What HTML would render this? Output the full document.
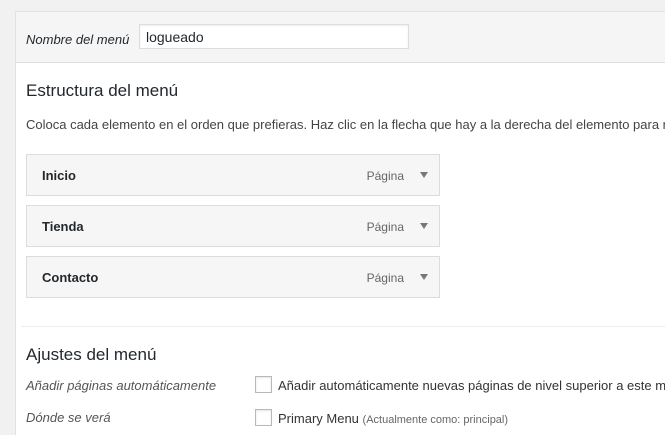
<!DOCTYPE html>
<html style="overflow:hidden;width:665px;height:435px"><head><meta charset="utf-8"><style>
body{margin:0;width:665px;height:435px;background:#f1f1f1;font-family:"Liberation Sans",sans-serif;color:#23282d;overflow:hidden;position:relative;font-size:13px}
.panel{position:absolute;left:15px;top:11px;width:660px;height:440px;background:#fff;border:1px solid #e2e2e2;overflow:hidden}
.hdr{position:absolute;left:0;top:0;right:0;height:50px;background:#f5f5f5;border-bottom:1px solid #dedede}
.a{position:absolute;white-space:nowrap}
.inp{position:absolute;left:123px;top:12px;height:25px;background:#fff;border:1px solid #ddd;box-shadow:inset 0 1px 2px rgba(0,0,0,.07);font-size:14px;line-height:25px;padding-left:6px;box-sizing:border-box;width:270px}
.item{position:absolute;left:10px;width:412px;height:40px;background:#f6f6f6;border:1px solid #dcdcdc;}
.item b{position:absolute;left:15px;top:13px;font-size:13px;font-weight:bold;color:#23282d}
.item span{position:absolute;right:35px;top:14px;font-size:12px;color:#666}
.item i{position:absolute;right:11px;top:17px;width:0;height:0;border-left:4px solid transparent;border-right:4px solid transparent;border-top:6px solid #777}
.cb{position:absolute;width:15px;height:15px;border:1px solid #b4b9be;background:#fff;box-shadow:inset 0 1px 2px rgba(0,0,0,.1)}
.it{font-style:italic;color:#555;font-size:13px}
</style></head><body>
<div class="panel">
 <div class="hdr">
  <div class="a it" style="left:10px;top:20px;color:#23282d">Nombre del menú</div>
  <div class="inp">logueado</div>
 </div>
 <div class="a" style="left:10px;top:69px;font-size:17px">Estructura del menú</div>
 <div class="a" style="left:10px;top:105px;font-size:13px;color:#444">Coloca cada elemento en el orden que prefieras. Haz clic en la flecha que hay a la derecha del elemento para mostrar más opciones.</div>
 <div class="item" style="top:142px"><b>Inicio</b><span>Página</span><i></i></div>
 <div class="item" style="top:193px"><b>Tienda</b><span>Página</span><i></i></div>
 <div class="item" style="top:244px"><b>Contacto</b><span>Página</span><i></i></div>
 <div class="a" style="left:5px;top:314px;width:700px;border-top:1px solid #eee"></div>
 <div class="a" style="left:10px;top:333px;font-size:17px">Ajustes del menú</div>
 <div class="a it" style="left:10px;top:366px">Añadir páginas automáticamente</div>
 <div class="cb" style="left:239px;top:364px"></div>
 <div class="a" style="left:262px;top:366px;color:#333">Añadir automáticamente nuevas páginas de nivel superior a este menú</div>
 <div class="a it" style="left:10px;top:398px">Dónde se verá</div>
 <div class="cb" style="left:239px;top:397px"></div>
 <div class="a" style="left:262px;top:399px;color:#333">Primary Menu <span style="font-size:11px;color:#666">(Actualmente como: principal)</span></div>
</div>
</body></html>
